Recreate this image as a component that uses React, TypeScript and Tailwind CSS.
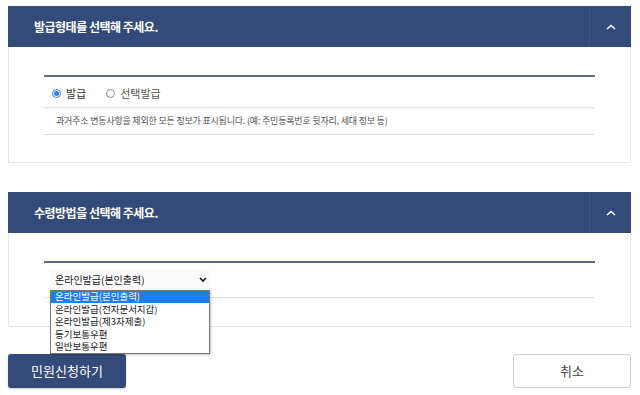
import React from 'react';

const font = { fontFamily: '"Noto Sans CJK KR", "Noto Sans", sans-serif' };

const options = ['온라인발급(본인출력)', '온라인발급(전자문서지갑)', '온라인발급(제3자제출)', '등기보통우편', '일반보통우편'];

const PanelHeader: React.FC<{ title: string }> = ({ title }) => (
  <div className="flex h-[41px] items-center bg-[#344a78]">
    <h2 className="flex-1 pl-[26px] text-[12px] font-bold tracking-[-0.5px] text-white">{title}</h2>
    <div className="flex h-full w-[42px] items-center justify-center border-l border-[#3f5584]">
      <svg width="10" height="6" viewBox="0 0 10 6" fill="none">
        <path d="M1 5L5 1.5L9 5" stroke="#ffffff" strokeWidth="1.6" />
      </svg>
    </div>
  </div>
);

const App: React.FC = () => {
  return (
    <div className="min-h-[395px] bg-white px-[8px] pt-[6px] pr-[9px] text-[#333]" style={font}>
      {/* 발급형태 */}
      <section>
        <PanelHeader title="발급형태를 선택해 주세요." />
        <div className="border border-t-0 border-[#e6e6e6] pl-[35px] pr-[35px] pt-[28px] pb-[27px]">
          <div className="h-[2px] bg-[#5b6a84]" />
          <div className="flex h-[31px] items-center gap-[20px] border-b border-[#e4e4e4] pl-[8px] pt-[2px] text-[11px] shadow-[0_1px_1px_rgba(0,0,0,0.03)]">
            <label className="flex items-center gap-[5px]">
              <span className="flex h-[9px] w-[9px] items-center justify-center rounded-full border border-[#3b82f6] bg-white">
                <span className="h-[5px] w-[5px] rounded-full bg-[#2f7ff0]" />
              </span>
              발급
            </label>
            <label className="flex items-center gap-[5px] text-[#555]">
              <span className="h-[9px] w-[9px] rounded-full border border-[#888] bg-white" />
              선택발급
            </label>
          </div>
          <div className="flex h-[27px] items-center border-b border-[#dcdcdc] pl-[12px] text-[9px] tracking-[-0.2px] text-[#555]">
            과거주소 변동사항을 제외한 모든 정보가 표시됩니다. (예: 주민등록번호 뒷자리, 세대 정보 등)
          </div>
        </div>
      </section>

      {/* 수령방법 */}
      <section className="mt-[29px]">
        <PanelHeader title="수령방법을 선택해 주세요." />
        <div className="border border-t-0 border-[#e6e6e6] pl-[35px] pr-[35px] pt-[28px] pb-[28px]">
          <div className="h-[2px] bg-[#5b6a84]" />
          <div className="relative h-[35px] border-b border-[#e0e0e0] pl-[6px] pt-[7px]">
            <div className="flex h-[19px] w-[160px] items-center justify-between bg-[#fafafa] pl-[5px] pr-[2px] text-[10px] text-[#222]">
              <span>온라인발급(본인출력)</span>
              <svg width="8" height="5" viewBox="0 0 8 5" fill="none" className="mr-[1px]">
                <path d="M1 1L4 4L7 1" stroke="#111" strokeWidth="1.6" />
              </svg>
            </div>
            <ul className="absolute left-[6px] top-[27px] z-10 w-[160px] border border-[#777] bg-white text-[9.5px] text-[#222] shadow-[1px_1px_2px_rgba(0,0,0,0.25)]">
              {options.map((o, i) => (
                <li
                  key={o}
                  className={
                    i === 0
                      ? 'flex h-[12.4px] items-center bg-[#1e7cf4] pl-[4px] text-white'
                      : 'flex h-[12.4px] items-center pl-[4px]'
                  }
                >
                  <span className="leading-none">{o}</span>
                </li>
              ))}
            </ul>
          </div>
        </div>
      </section>

      {/* 버튼 */}
      <div className="mt-[27px] flex justify-between">
        <button className="h-[34px] w-[118px] rounded-[3px] bg-[#344a78] text-[13px] text-white shadow-[0_1px_2px_rgba(0,0,0,0.2)]">
          민원신청하기
        </button>
        <button className="h-[34px] w-[118px] rounded-[3px] border border-[#cfcfcf] bg-white text-[13px] text-[#444]">
          취소
        </button>
      </div>
    </div>
  );
};

export default App;
